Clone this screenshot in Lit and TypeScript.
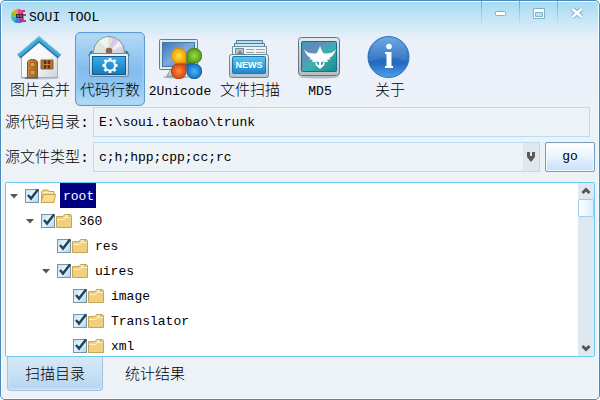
import { LitElement, html, svg, css, nothing } from "lit";
import { customElement, state } from "lit/decorators.js";

const logo = html`<svg class="logo" viewBox="0 0 16 16" aria-hidden="true">
  <path d="M8 8V1A7 7 0 0 1 13 3Z" fill="#e8409a"/>
  <path d="M8 8L2.500 3.500A7 7 0 0 1 8 1Z" fill="#f39a1d"/>
  <path d="M8 8L1 9A7 7 0 0 1 2.500 3.500Z" fill="#8fc31f"/>
  <path d="M8 8L4 14A7 7 0 0 1 1 9Z" fill="#28b9d8"/>
  <path d="M8 8L9 15A7 7 0 0 1 4 14Z" fill="#2b7fe0"/>
  <path d="M8 8L14 13A7 7 0 0 1 9 15Z" fill="#7a45c4"/>
  <path d="M8 8L13 3L14 13Z" fill="#d82668"/>
  <path d="M12 2h3v2h-3zM13 6h3v2h-3zM12 12h4v2h-4z" fill="#d8305c"/>
  <rect x="6" y="6" width="7" height="4" fill="#3b2a3c"/>
  <path d="M7 8h2M10 8h2" stroke="#b9a4b8"/>
</svg>`;

const icons: Record<string, unknown> = {
  house: svg`
    <defs>
      <linearGradient id="wall" x2="1" y2="1"><stop offset="0" stop-color="#fff"/><stop offset=".6" stop-color="#f4f6f8"/><stop offset="1" stop-color="#cbd2d9"/></linearGradient>
      <linearGradient id="door" x2="1"><stop offset="0" stop-color="#cf8c40"/><stop offset="1" stop-color="#a9661f"/></linearGradient>
    </defs>
    <ellipse cx="24" cy="44" rx="20" ry="1.500" fill="#8b98a5" opacity=".5"/>
    <path d="M5.500 20L23 5L41.500 20V43.500H5.500Z" fill="url(#wall)" stroke="#a3afba"/>
    <path d="M9 44h13" stroke="#6d8798" stroke-width="2"/>
    <path d="M11.500 43.500V29q0-3.500 5-3.500t5 3.500V43.500Z" fill="url(#door)" stroke="#85521c"/>
    <path d="M14 33v-3q0-2 2.500-2t2.500 2v3zM14 36h5v5h-5z" fill="#d79a52" stroke="#9b5f1f"/>
    <path d="M25 26h12v9h-12z" fill="#b06f2c" stroke="#9a5f22"/>
    <path d="M28 26.500h6v8h-6z" fill="#4d3520"/>
    <path d="M31 26v9M28 30.500h6" stroke="#c8904f"/>
    <path d="M3 22.500L23 5.500L43.500 22.500" fill="none" stroke="#2b7ba8" stroke-width="5"/>
    <path d="M3 21.500L23 4.500L43.500 21.500" fill="none" stroke="#45a8d8" stroke-width="3.500"/>
    <path d="M2.500 20L23 3L44 20" fill="none" stroke="#7ccbed"/>`,
  disc: svg`
    <defs>
      <linearGradient id="cd" x2="1" y2="1"><stop offset="0" stop-color="#eee"/><stop offset=".3" stop-color="#d9e7dc"/><stop offset=".5" stop-color="#eed5dd"/><stop offset=".7" stop-color="#c8d8df"/><stop offset="1" stop-color="#999"/></linearGradient>
      <linearGradient id="case" x2="0" y2="1"><stop offset="0" stop-color="#eef7fb"/><stop offset="1" stop-color="#b7cad5"/></linearGradient>
      <linearGradient id="panel" x2="0" y2="1"><stop offset="0" stop-color="#39aee9"/><stop offset="1" stop-color="#1678bd"/></linearGradient>
    </defs>
    <circle cx="23" cy="18" r="15.500" fill="url(#cd)" stroke="#858f97"/>
    <path d="M23 18L13 7q4-4 9-4zM23 18L36 12q-2-5-6-7z" fill="#fff" opacity=".55"/>
    <path d="M23 18L27 3q4 1 6 4z" fill="#c6b7e9" opacity=".6"/>
    <circle cx="23" cy="17" r="4" fill="#88665b" stroke="#e9e4df"/>
    <path d="M6 17L3 22M40 17l3 5" stroke="#2e6d8d" stroke-width="2"/>
    <rect x="3.500" y="19.500" width="39" height="23" rx="2" fill="url(#case)" stroke="#62899f"/>
    <rect x="6.500" y="22.500" width="33" height="18" fill="url(#panel)" stroke="#0f5b92"/>
    <circle cx="24" cy="31.500" r="5" fill="none" stroke="#f1faff" stroke-width="2"/>
    <g stroke="#f1faff" stroke-width="3"><path d="M24 24v2.500M24 36.500V39M16.500 31.500h2.500M29 31.500h2.500M18.500 26l2 2M27.500 35l2 2M29.500 26l-2 2M20.500 35l-2 2"/></g>`,
  petals: svg`
    <defs>
      <linearGradient id="screen" x2="1" y2="1"><stop offset="0" stop-color="#3a76b8"/><stop offset=".5" stop-color="#80a9dc"/><stop offset="1" stop-color="#4a6dbb"/></linearGradient>
      <radialGradient id="py"><stop offset="0" stop-color="#ffe04a"/><stop offset="1" stop-color="#f5a300"/></radialGradient>
      <radialGradient id="pg"><stop offset="0" stop-color="#9bd84a"/><stop offset="1" stop-color="#569d17"/></radialGradient>
      <radialGradient id="po"><stop offset="0" stop-color="#ff8a3d"/><stop offset="1" stop-color="#d94a10"/></radialGradient>
      <radialGradient id="pb"><stop offset="0" stop-color="#49b7f5"/><stop offset="1" stop-color="#1673c4"/></radialGradient>
    </defs>
    <ellipse cx="20" cy="43" rx="13" ry="1.500" fill="#a6b4bd"/>
    <path d="M15 35h10v7H11z" fill="#c9d6dd" stroke="#8196a3"/>
    <rect x="3.500" y="5.500" width="38" height="30" rx="1" fill="#dcebf1" stroke="#587f94"/>
    <rect x="6.500" y="8.500" width="32" height="24" fill="url(#screen)" stroke="#427ba2"/>
    <path d="M30 29H22A6.500 6.500 0 0 1 15.500 22.500V21A6.500 6.500 0 0 1 22 14.500H23.500A6.500 6.500 0 0 1 30 21Z" fill="url(#py)" stroke="#d98b00"/>
    <path d="M31 29V21A6.500 6.500 0 0 1 37.500 14.500H39A6.500 6.500 0 0 1 45.500 21V22.500A6.500 6.500 0 0 1 39 29Z" fill="url(#pg)" stroke="#48820f"/>
    <path d="M30 30V38A6.500 6.500 0 0 1 23.500 44.500H22A6.500 6.500 0 0 1 15.500 38V36.500A6.500 6.500 0 0 1 22 30Z" fill="url(#po)" stroke="#b63d0b"/>
    <path d="M31 30H39A6.500 6.500 0 0 1 45.500 36.500V38A6.500 6.500 0 0 1 39 44.500H37.500A6.500 6.500 0 0 1 31 38Z" fill="url(#pb)" stroke="#0f5da5"/>`,
  news: svg`
    <defs>
      <linearGradient id="tray" x2="0" y2="1"><stop offset="0" stop-color="#eef4f7"/><stop offset="1" stop-color="#aebfca"/></linearGradient>
      <linearGradient id="plate" x2="0" y2="1"><stop offset="0" stop-color="#5cc5ef"/><stop offset="1" stop-color="#1b86c9"/></linearGradient>
    </defs>
    <path d="M10.500 20V6.500H36.500V20" fill="#b8dcea" stroke="#4a8098"/>
    <path d="M8.500 20V9.500H38.500V20" fill="#cfe7f0" stroke="#4a8098"/>
    <path d="M6.500 22V12.500H40.500V22" fill="#eef2f4" stroke="#6f929f"/>
    <rect x="9.500" y="14.500" width="8" height="6" fill="#b9c5cc" stroke="#7c8d96"/>
    <path d="M20 15.500h8M30 15.500h9M20 18.500h8M30 18.500h9" stroke="#9aa9b1"/>
    <path d="M11 20l3-4 3 4z" fill="#72848f"/>
    <rect x="3.500" y="20.500" width="39" height="23" rx="2" fill="url(#tray)" stroke="#6c8897"/>
    <rect x="6.500" y="22.500" width="33" height="17" rx="1" fill="url(#plate)" stroke="#1d76ae"/>
    <text x="23" y="34" text-anchor="middle" font-family="Liberation Sans, sans-serif" font-weight="700" font-size="9" fill="#fff">NEWS</text>`,
  md5: svg`
    <defs>
      <linearGradient id="frame" x2="0" y2="1"><stop offset="0" stop-color="#e3eaeb"/><stop offset="1" stop-color="#b4bec0"/></linearGradient>
      <linearGradient id="teal" x2="1" y2="1"><stop offset="0" stop-color="#29a5b5"/><stop offset=".25" stop-color="#6688be"/><stop offset=".55" stop-color="#3dafb0"/><stop offset="1" stop-color="#178a8e"/></linearGradient>
    </defs>
    <ellipse cx="23" cy="43" rx="20" ry="1.500" fill="#7d8a90" opacity=".5"/>
    <rect x="2.500" y="3.500" width="41" height="38" rx="3" fill="url(#frame)" stroke="#65777e"/>
    <rect x="5.500" y="7.500" width="35" height="30" rx="1" fill="url(#teal)" stroke="#14718a"/>
    <path d="M8 15Q11 20 20 19.500Q22 18 24 12Q26 18 28 19.500Q37 20 40 15Q38 22 33 24L35 25L31 26L32 28L28.500 28L28.500 31L24 35L19.500 31L19.500 28L16 28L17 26L13 25L15 24Q10 22 8 15Z" fill="#fff"/>
    <path d="M20 27l3 1.500v2.500h-1zM28 27l-3 1.500v2.500h1z" fill="#2c8ca5"/>`,
  info: svg`
    <defs>
      <linearGradient id="ball" x2="0" y2="1"><stop offset="0" stop-color="#5ea2e0"/><stop offset=".5" stop-color="#2a6fc4"/><stop offset=".65" stop-color="#2669c0"/><stop offset="1" stop-color="#4da0ec"/></linearGradient>
    </defs>
    <circle cx="22.500" cy="23" r="20.500" fill="url(#ball)" stroke="#3373b6"/>
    <path d="M4 27A19 19 0 1 1 41 27Q22 20 4 27Z" fill="#fff" opacity=".1"/>
    <circle cx="23" cy="12.500" r="2.800" fill="#fff"/>
    <path d="M19 18h6.500v14H27v2H19V32h1.500V20H19Z" fill="#fff"/>`,
};

const folder = (open: boolean) => html`<svg class="folder" viewBox="0 0 16 16" aria-hidden="true">
  ${open
    ? svg`<path d="M1.500 14V3.500L3 2h5l1 1.500h5V6" fill="#f0d283" stroke="#c9a253"/>
        <path d="M3 4.500h10" stroke="#fff2c4"/>
        <path d="M1 14.500L3.500 6.500H15.500L14 14.500Z" fill="#f8dc8f" stroke="#cda24c"/>`
    : svg`<path d="M.500 14.500V3.500H7L8.500 1.500h6l1 1V14.500Z" fill="#f0cf7f" stroke="#c9a354"/>
        <path d="M1 6.500H8L9 4.500h6" fill="none" stroke="#fff0bd"/>
        <path d="M9 3h5" stroke="#fff"/><path d="M12 3h2" stroke="#39a6dc"/>`}
</svg>`;

const tick = html`<svg class="tick" viewBox="0 0 16 16" aria-hidden="true">
  <path d="M3 7L6 10.500L13 1.500" fill="none" stroke="#24435c" stroke-width="2.500"/>
</svg>`;

const chevron = (up: boolean) => html`<svg class="chevron" viewBox="0 0 10 8" aria-hidden="true">
  <path d=${up ? "M1.500 6L5 2.500L8.500 6" : "M1.500 2L5 5.500L8.500 2"} fill="none" stroke="#555" stroke-width="3"/>
</svg>`;

const tools = [
  { icon: "house", label: "图片合并" },
  { icon: "disc", label: "代码行数" },
  { icon: "petals", label: "2Unicode" },
  { icon: "news", label: "文件扫描" },
  { icon: "md5", label: "MD5" },
  { icon: "info", label: "关于" },
];

interface TreeNode { name: string; children?: TreeNode[] }

const tree: TreeNode = {
  name: "root",
  children: [{
    name: "360",
    children: [
      { name: "res" },
      { name: "uires", children: [{ name: "image" }, { name: "Translator" }, { name: "xml" }] },
    ],
  }],
};

@customElement("app-root")
export class AppRoot extends LitElement {
  @state() private tool = "代码行数";
  @state() private tab = "扫描目录";
  @state() private selected = "root";

  static styles = css`
    :host { display: block; }
    * { box-sizing: border-box; }
    button, input, select { font: inherit; color: inherit; margin: 0; }
    button { border: 0; padding: 0; background: none; }
    ul { list-style: none; margin: 0; padding: 0; }
    .window {
      height: 100vh; display: flex; flex-direction: column;
      font: 13px/16px "Liberation Mono", "Noto Sans CJK SC", monospace; color: #000;
      border: 1px solid #4a8aba; border-radius: 5px; padding: 0 4px 8px;
      box-shadow: inset 0 0 0 1px #f4fafd;
      background: linear-gradient(#a5dbf2 0, #c9e7f5 20px, #ebf1f9 40px, #ebf0f9 80px, #edf2f6 110px);
    }
    .cjk { font-size: 15px; font-weight: 300; }
    .titlebar { display: flex; align-items: flex-start; height: 31px; padding-left: 5px; }
    .logo { width: 16px; height: 16px; margin: 7px 3px 0 0; }
    .title { flex: 1; font: inherit; margin: 9px 0 0; }
    .winbtn {
      width: 38px; height: 24px; display: grid; place-items: center;
      border-left: 1px solid; border-image: linear-gradient(#6baac9, #d0e8f3) 1;
    }
    .winbtn svg { width: 16px; height: 14px; }
    .toolbar { display: flex; }
    .tool {
      width: 70px; height: 74px; border: 1px solid transparent; border-radius: 5px;
      display: flex; flex-direction: column; align-items: center; padding-top: 1px;
    }
    .tool svg { width: 48px; height: 48px; }
    .tool span { line-height: 20px; white-space: nowrap; }
    .tool.on {
      border-color: #5c9bd0; background: linear-gradient(#b7dbf4, #83bdee 50%, #8ec5f2 75%, #b5dcf8);
      box-shadow: inset 0 0 2px 1px #a1d1f5;
    }
    .form { display: grid; grid-template-columns: 88px 1fr 50px; grid-auto-rows: 30px; row-gap: 5px; margin-top: 1px; }
    .form label { line-height: 34px; white-space: nowrap; }
    .field {
      height: 30px; border: 1px solid #b7dcf3; border-radius: 0; background: #edf2f6;
      padding: 1px 5px 0; width: 100%; outline: 0;
    }
    .path { grid-column: 2 / 4; padding-right: 5px; }
    .combo { display: grid; margin-right: 5px; }
    .combo > * { grid-area: 1 / 1; }
    .combo select { appearance: none; }
    .drop {
      justify-self: end; width: 16px; margin: 1px; background: #dee8f0;
      display: grid; place-items: center; pointer-events: none;
    }
    .drop svg { width: 10px; height: 12px; }
    .go {
      height: 30px; border: 1px solid #7a9bc0; border-radius: 2px;
      background: linear-gradient(#fff, #eef6fe 40%, #c5e0fb); box-shadow: inset 0 0 0 1px #f2f9ff;
    }
    .panel {
      flex: 1; min-height: 0; margin-top: 10px; border: 1px solid #6ccaf0; border-radius: 2px; background: #fff;
      display: flex;
    }
    .tree { flex: 1; overflow: hidden; }
    .branch { padding-left: 16px; }
    .row { display: flex; align-items: center; height: 25px; }
    .twist { width: 16px; height: 16px; display: grid; place-items: center; margin-right: 3px; }
    .twist svg { width: 10px; height: 6px; }
    .check { display: grid; width: 15px; height: 16px; }
    .check > * { grid-area: 1 / 1; }
    .check input {
      appearance: none; width: 14px; height: 14px; margin: 1px 0; border: 1px solid #7994a7;
      background: linear-gradient(135deg, #bfe1f1, #e8f7fd 45%, #a9d7ea);
    }
    .tick { width: 16px; height: 16px; pointer-events: none; display: none; }
    .check input:checked + .tick { display: block; }
    .folder { width: 16px; height: 16px; margin-right: 4px; }
    .name { height: 25px; padding: 2px 2px 0 3px; }
    .name.on { background: #000080; color: #fff; }
    .scroll { width: 16px; background: #dee8f0; display: flex; flex-direction: column; }
    .scroll button { height: 16px; display: grid; place-items: center; }
    .chevron { width: 10px; height: 8px; }
    .track { flex: 1; }
    .thumb { height: 18px; border: 1px solid #9fcdf5; border-radius: 2px; background: linear-gradient(90deg, #fff, #dceefd); }
    .tabs { display: flex; gap: 4px; padding-left: 2px; }
    .tab { width: 96px; height: 34px; border: 1px solid transparent; border-top: 0; border-radius: 0 0 4px 4px; padding-top: 4px; }
    .tab.on { border-color: #a0c3e2; background: linear-gradient(#d6e8f6, #c9e0f4 50%, #b5d5f1); box-shadow: inset 0 -1px 2px #d6ebfb; }
  `;

  private node(n: TreeNode): unknown {
    const on = n.name === this.selected;
    return html`<li role="treeitem" aria-selected=${on}>
      <div class="row">
        ${n.children
          ? html`<button class="twist" aria-label="折叠 ${n.name}"><svg viewBox="0 0 10 6"><path d="M1 1h8L5 5.500z" fill="#555"/></svg></button>`
          : html`<span class="twist"></span>`}
        <span class="check"><input type="checkbox" checked aria-label=${n.name} />${tick}</span>
        ${folder(n.name === "root")}
        <button class="name ${on ? "on" : ""}" @click=${() => (this.selected = n.name)}>${n.name}</button>
      </div>
      ${n.children ? html`<ul class="branch" role="group">${n.children.map((c) => this.node(c))}</ul>` : nothing}
    </li>`;
  }

  render() {
    return html`<main class="window">
      <header class="titlebar">
        ${logo}
        <h1 class="title">SOUI TOOL</h1>
        <button class="winbtn" aria-label="最小化"><svg viewBox="0 0 16 14"><rect x="2.500" y="5.500" width="10" height="4" rx="1" fill="#fff" stroke="#7fb2cc"/></svg></button>
        <button class="winbtn" aria-label="最大化"><svg viewBox="0 0 16 14"><path d="M2.500 2.500h11v10h-11z" fill="#fff" stroke="#7fb2cc"/><path d="M4.500 6.500h7v4h-7z" fill="#b9e0f1" stroke="#7fb2cc"/></svg></button>
        <button class="winbtn" aria-label="关闭"><svg viewBox="0 0 16 14"><path d="M3.500 3l9 8M12.500 3l-9 8" stroke="#7fb2cc" stroke-width="4.500"/><path d="M3.500 3l9 8M12.500 3l-9 8" stroke="#fff" stroke-width="2.500"/></svg></button>
      </header>
      <nav class="toolbar">
        ${tools.map((t) => html`<button class="tool ${t.label === this.tool ? "on" : ""}" @click=${() => (this.tool = t.label)}>
          <svg viewBox="0 0 48 48" aria-hidden="true">${icons[t.icon]}</svg>
          <span class=${/^\w+$/.test(t.label) ? "" : "cjk"}>${t.label}</span>
        </button>`)}
      </nav>
      <form class="form" @submit=${(e: Event) => e.preventDefault()}>
        <label class="cjk" for="dir">源代码目录:</label>
        <div class="path"><input class="field" id="dir" value="E:\\soui.taobao\\trunk" /></div>
        <label class="cjk" for="types">源文件类型:</label>
        <div class="combo">
          <select class="field" id="types"><option>c;h;hpp;cpp;cc;rc</option></select>
          <span class="drop"><svg viewBox="0 0 10 12"><path d="M1 1h3v4h2V1h3v5L5 11L1 6z" fill="#5a5a5a"/></svg></span>
        </div>
        <button class="go">go</button>
      </form>
      <section class="panel">
        <ul class="tree" role="tree">${this.node(tree)}</ul>
        <div class="scroll">
          <button aria-label="向上滚动">${chevron(true)}</button>
          <div class="track"><div class="thumb"></div></div>
          <button aria-label="向下滚动">${chevron(false)}</button>
        </div>
      </section>
      <div class="tabs" role="tablist">
        ${["扫描目录", "统计结果"].map((t) => html`<button role="tab" class="tab cjk ${t === this.tab ? "on" : ""}"
          aria-selected=${t === this.tab} @click=${() => (this.tab = t)}>${t}</button>`)}
      </div>
    </main>`;
  }
}
